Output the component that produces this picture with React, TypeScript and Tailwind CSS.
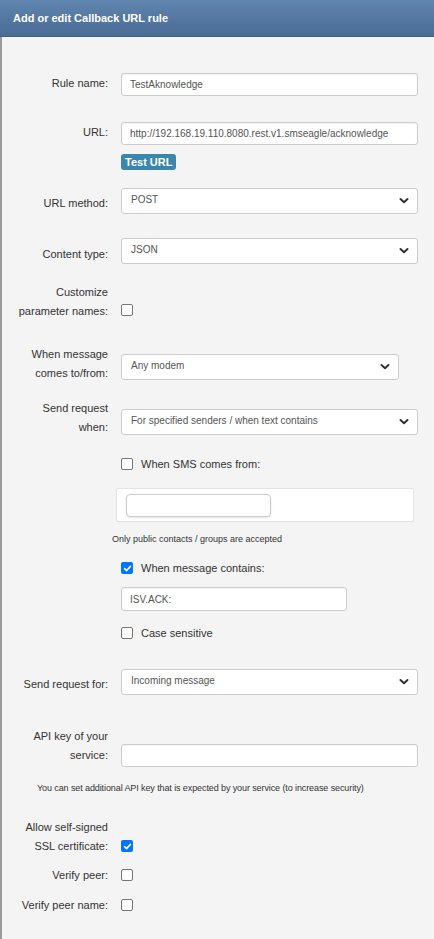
import React from 'react';

const font = { fontFamily: '"Liberation Sans", Arial, sans-serif' };

function Box({ checked = false }: { checked?: boolean }) {
  if (checked) {
    return (
      <span className="flex h-[12px] w-[12px] shrink-0 items-center justify-center rounded-[2px] bg-[#0075ff]">
        <svg width="9" height="9" viewBox="0 0 10 10">
          <path d="M1.8 5.2 L4 7.3 L8.3 2.6" fill="none" stroke="#fff" strokeWidth="1.8" strokeLinecap="round" strokeLinejoin="round" />
        </svg>
      </span>
    );
  }
  return <span className="block h-[12px] w-[12px] shrink-0 rounded-[2px] border border-[#767676] bg-white" />;
}

function Chevron() {
  return (
    <svg width="10" height="7" viewBox="0 0 10 7" className="absolute right-[8px] top-1/2 -translate-y-1/2">
      <path d="M1.5 1.5 L5 4.8 L8.5 1.5" fill="none" stroke="#333" strokeWidth="2" strokeLinecap="round" strokeLinejoin="round" />
    </svg>
  );
}

function Select({ value, width = 'w-[297px]' }: { value: string; width?: string }) {
  return (
    <div className={`relative h-[26px] ${width} rounded-[3px] border border-[#ccc] bg-white`}>
      <span className="absolute left-[9px] top-[5px] text-[10px] leading-[12px] text-[#555]">{value}</span>
      <Chevron />
    </div>
  );
}

function Input({ value = '', width = 'w-[297px]', height = 'h-[23px]' }: { value?: string; width?: string; height?: string }) {
  return (
    <div className={`flex ${height} ${width} items-center rounded-[3px] border border-[#ccc] bg-white pl-[8px] text-[10px] text-[#555] shadow-[inset_0_1px_1px_rgba(0,0,0,0.05)]`}>
      {value}
    </div>
  );
}

function Label({ children, pt = 'pt-0' }: { children: React.ReactNode; pt?: string }) {
  return (
    <div className={`w-[106px] shrink-0 text-right text-[11px] leading-[19px] text-[#333] ${pt}`}>{children}</div>
  );
}

function CheckLine({ checked = false, text }: { checked?: boolean; text: string }) {
  return (
    <div className="ml-[119px] flex items-center gap-[8px] text-[11px] leading-[19px] text-[#333]">
      <Box checked={checked} />
      <span>{text}</span>
    </div>
  );
}

export default function App() {
  return (
    <div className="min-h-screen bg-[#f4f4f4]" style={font}>
      <div className="flex h-[37px] items-center border-b border-[#3f5f86] bg-gradient-to-b from-[#6085ae] to-[#4a6c97] pl-[13px]">
        <h1 className="text-[11px] font-bold text-white">Add or edit Callback URL rule</h1>
      </div>

      <div className="min-h-[902px] border-l-2 border-[#9a9a9a] pt-[36px]">
        {/* Rule name */}
        <div className="flex h-[49px] items-start gap-[13px]">
          <Label pt="pt-px">Rule name:</Label>
          <Input value="TestAknowledge" />
        </div>

        {/* URL */}
        <div className="flex h-[32px] items-start gap-[13px]">
          <Label pt="pt-px">URL:</Label>
          <Input value="http://192.168.19.110.8080.rest.v1.smseagle/acknowledge" />
        </div>
        <div className="flex h-[34px] items-start pl-[119px]">
          <span className="block h-[16px] rounded-[3px] bg-[#3a87ad] px-[4px] text-[11px] font-bold leading-[16px] text-white">
            Test URL
          </span>
        </div>

        {/* URL method */}
        <div className="flex h-[50px] items-start gap-[13px]">
          <Label pt="pt-[6px]">URL method:</Label>
          <Select value="POST" />
        </div>

        {/* Content type */}
        <div className="flex h-[44.5px] items-start gap-[13px]">
          <Label pt="pt-[7px]">Content type:</Label>
          <Select value="JSON" />
        </div>

        {/* Customize */}
        <div className="flex h-[62px] items-start gap-[13px]">
          <Label>
            Customize
            <br />
            parameter names:
          </Label>
          <div className="flex pt-[21.5px]">
            <Box />
          </div>
        </div>

        {/* When message comes */}
        <div className="flex h-[54px] items-start gap-[13px]">
          <Label>
            When message
            <br />
            comes to/from:
          </Label>
          <div className="pt-[9.5px]">
            <Select value="Any modem" width="w-[278px]" />
          </div>
        </div>

        {/* Send request when */}
        <div className="flex h-[56px] items-start gap-[13px]">
          <Label>
            Send request
            <br />
            when:
          </Label>
          <div className="pt-[10.5px]">
            <Select value="For specified senders / when text contains" />
          </div>
        </div>

        <div className="h-[33.5px]">
          <CheckLine text="When SMS comes from:" />
        </div>

        <div className="ml-[114px] flex h-[34px] w-[298px] items-start rounded-[2px] border border-[#e3e3e3] bg-white pl-[9px] pt-[5px]">
          <div className="h-[23px] w-[145px] rounded-[4px] border border-[#ccc] bg-white shadow-[0_1px_2px_rgba(0,0,0,0.12)]" />
        </div>

        <div className="h-[36.5px] pl-[110px] pt-[10px] text-[9px] leading-[14px] text-[#333]">
          Only public contacts / groups are accepted
        </div>

        <div className="h-[28.5px]">
          <CheckLine checked text="When message contains:" />
        </div>

        <div className="h-[36.5px] pl-[119px]">
          <Input value="ISV.ACK:" width="w-[226px]" height="h-[24px]" />
        </div>

        <div className="h-[45.5px]">
          <CheckLine text="Case sensitive" />
        </div>

        {/* Send request for */}
        <div className="flex h-[57.5px] items-start gap-[13px]">
          <Label pt="pt-[5.5px]">Send request for:</Label>
          <Select value="Incoming message" />
        </div>

        {/* API key */}
        <div className="flex h-[54.5px] items-start gap-[13px]">
          <Label>
            API key of your
            <br />
            service:
          </Label>
          <div className="pt-[17.5px]">
            <Input />
          </div>
        </div>

        <div className="h-[36.5px] pl-[35px] text-[9px] leading-[14px] tracking-[-0.1px] text-[#333]">
          You can set additional API key that is expected by your service (to increase security)
        </div>

        {/* SSL */}
        <div className="flex h-[48px] items-start gap-[13px]">
          <Label>
            Allow self-signed
            <br />
            SSL certificate:
          </Label>
          <div className="flex pt-[22.5px]">
            <Box checked />
          </div>
        </div>

        <div className="flex h-[30px] items-start gap-[13px]">
          <Label>Verify peer:</Label>
          <div className="flex pt-[3.5px]">
            <Box />
          </div>
        </div>
        <div className="flex h-[19px] items-start gap-[13px]">
          <Label>Verify peer name:</Label>
          <div className="flex pt-[3.5px]">
            <Box />
          </div>
        </div>
      </div>
    </div>
  );
}
